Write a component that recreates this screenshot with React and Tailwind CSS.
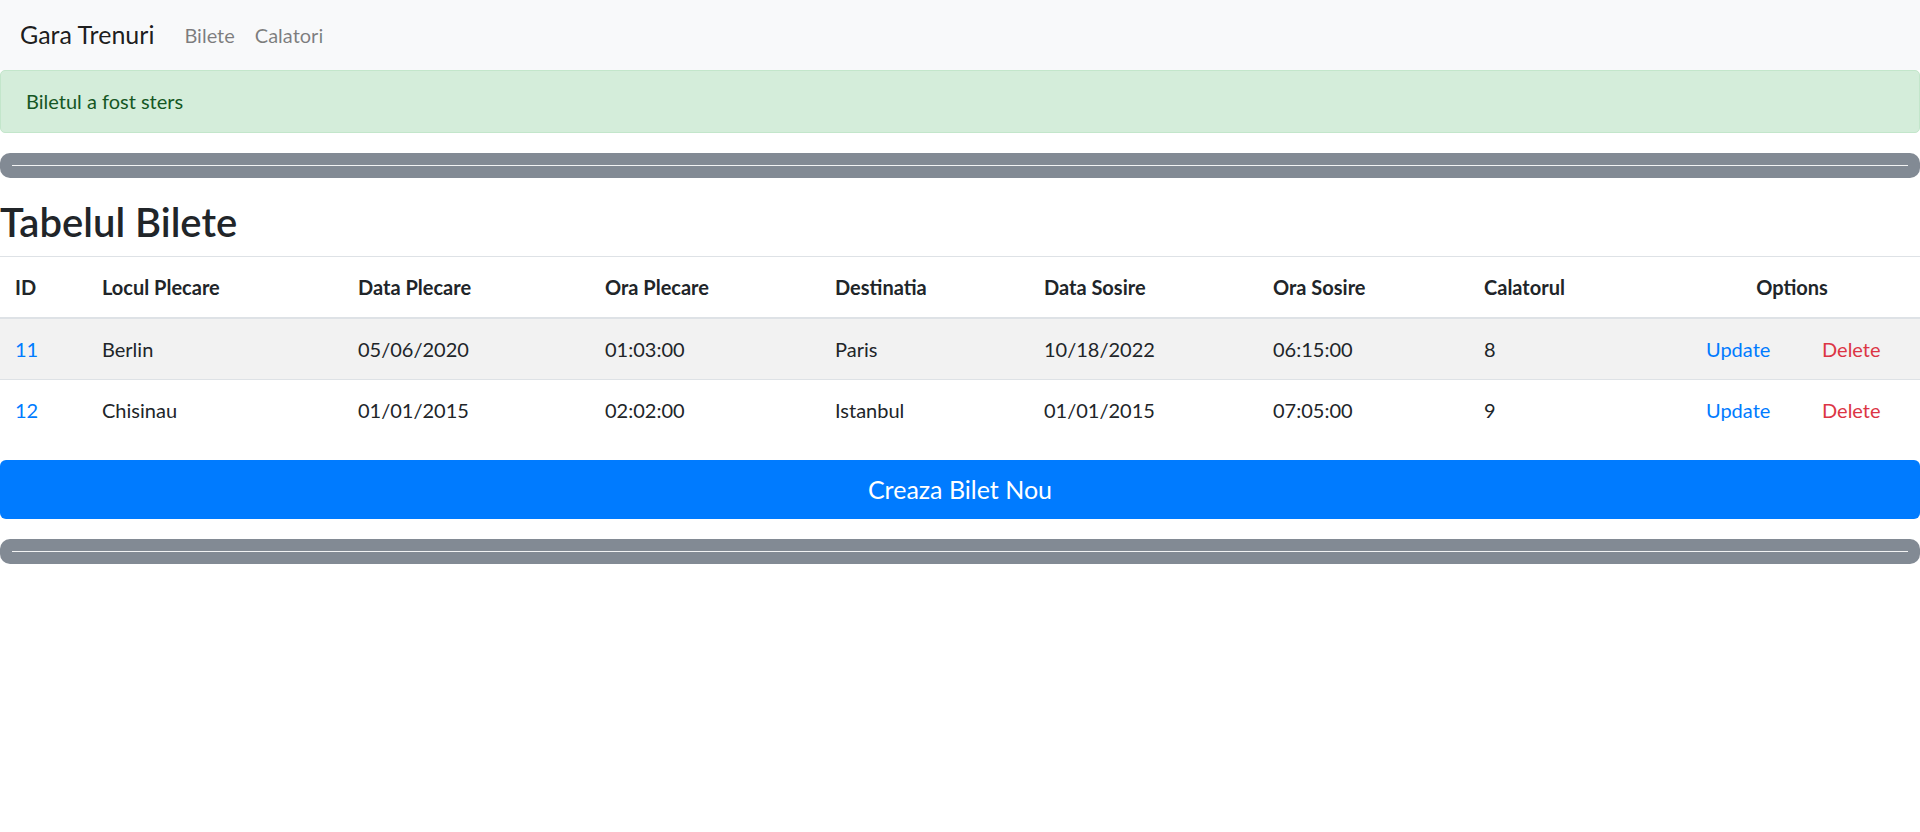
import React from "react";

const rows = [
  { id: 11, from: "Berlin", date: "05/06/2020", time: "01:03:00", dest: "Paris", arrDate: "10/18/2022", arrTime: "06:15:00", pass: 8 },
  { id: 12, from: "Chisinau", date: "01/01/2015", time: "02:02:00", dest: "Istanbul", arrDate: "01/01/2015", arrTime: "07:05:00", pass: 9 },
];

function Divider() {
  return (
    <div className="mb-5 h-[25px] rounded-[10px] bg-[#828a94] px-3 pt-3">
      <div className="h-px bg-white/90"></div>
    </div>
  );
}

export default function App() {
  return (
    <div className="min-h-screen bg-white font-[Lato,sans-serif] text-[20px] leading-[1.5] text-[#212529]">
      <nav className="flex h-[70px] items-center bg-[#f8f9fa] px-5">
        <span className="mr-5 text-[25px] text-black/90">Gara Trenuri</span>
        <a className="px-[10px] text-black/50" href="#">Bilete</a>
        <a className="px-[10px] text-black/50" href="#">Calatori</a>
      </nav>

      <div className="mb-5 rounded-[5px] border border-[#c3e6cb] bg-[#d4edda] px-[25px] pt-[15px] pb-[16px] text-[#155724]">
        Biletul a fost sters
      </div>

      <Divider />

      <h2 className="mb-[10px] text-[40px] font-semibold leading-[1.2]">Tabelul Bilete</h2>

      <table className="mb-5 w-full table-fixed border-collapse">
        <colgroup>
          <col className="w-[87px]" />
          <col className="w-[256px]" />
          <col className="w-[247px]" />
          <col className="w-[230px]" />
          <col className="w-[209px]" />
          <col className="w-[229px]" />
          <col className="w-[211px]" />
          <col className="w-[222px]" />
          <col className="w-[116px]" />
          <col className="w-[113px]" />
        </colgroup>
        <thead>
          <tr className="border-t border-b-2 border-t-[#dee2e6] border-b-[#dee2e6] text-left font-bold">
            <th className="p-[15px]">ID</th>
            <th className="p-[15px]">Locul Plecare</th>
            <th className="p-[15px]">Data Plecare</th>
            <th className="p-[15px]">Ora Plecare</th>
            <th className="p-[15px]">Destinatia</th>
            <th className="p-[15px]">Data Sosire</th>
            <th className="p-[15px]">Ora Sosire</th>
            <th className="p-[15px]">Calatorul</th>
            <th colSpan={2} className="py-[15px] pr-[27px] text-center">Options</th>
          </tr>
        </thead>
        <tbody>
          {rows.map((r, i) => (
            <tr key={r.id} className={`border-t border-[#dee2e6] ${i % 2 === 0 ? "bg-[#f2f2f2]" : ""}`}>
              <td className="p-[15px]"><a className="text-[#007bff]" href="#">{r.id}</a></td>
              <td className="p-[15px]">{r.from}</td>
              <td className="p-[15px]">{r.date}</td>
              <td className="p-[15px]">{r.time}</td>
              <td className="p-[15px]">{r.dest}</td>
              <td className="p-[15px]">{r.arrDate}</td>
              <td className="p-[15px]">{r.arrTime}</td>
              <td className="p-[15px]">{r.pass}</td>
              <td className="p-[15px]"><a className="text-[#007bff]" href="#">Update</a></td>
              <td className="p-[15px]"><a className="text-[#dc3545]" href="#">Delete</a></td>
            </tr>
          ))}
        </tbody>
      </table>

      <button className="mb-5 block h-[59px] w-full rounded-[6px] bg-[#007bff] text-[25px] text-white">
        Creaza Bilet Nou
      </button>

      <Divider />
    </div>
  );
}
